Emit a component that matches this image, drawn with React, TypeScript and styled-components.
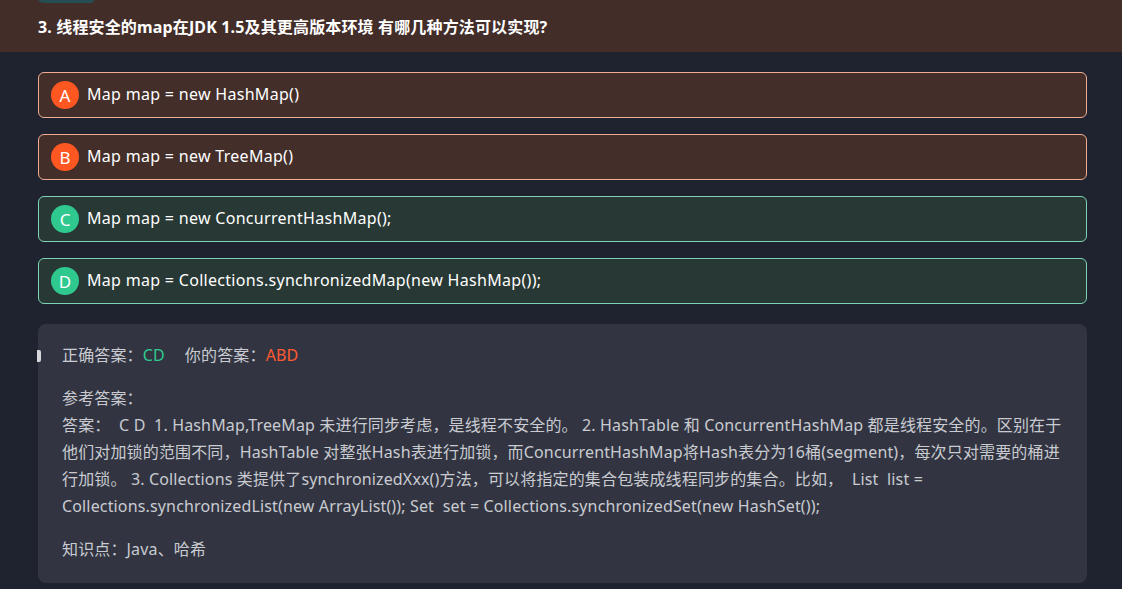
import React from "react";
import styled, { createGlobalStyle } from "styled-components";

const Global = createGlobalStyle`
  html, body { margin: 0; padding: 0; background: #1f2330; }
  body { font-family: "Noto Sans", "Noto Sans CJK SC", sans-serif; overflow: hidden; }
`;

const Page = styled.div`
  width: 1122px;
  height: 589px;
  overflow: hidden;
  background: #1f2330;
  display: flex;
  flex-direction: column;
`;

const Header = styled.header`
  position: relative;
  flex: none;
  height: 52px;
  background: #432d29;
  display: flex;
  align-items: center;
  padding: 0 38px;
  box-sizing: border-box;
`;

const Tag = styled.div`
  position: absolute;
  left: 38px;
  top: -20px;
  width: 57px;
  height: 23px;
  border-radius: 5px;
  background: #244e52;
`;

const Title = styled.h1`
  margin: 0;
  font-size: 16px;
  font-weight: 700;
  color: #ffffff;
  letter-spacing: 0.15px;
`;

const Body = styled.main`
  padding: 20px 35px 0 38px;
  display: flex;
  flex-direction: column;
  gap: 16px;
`;

const Option = styled.div<{ $ok: boolean }>`
  flex: none;
  height: 46px;
  box-sizing: border-box;
  border: 1px solid ${(p) => (p.$ok ? "#7ed3b4" : "#f0ad93")};
  background: ${(p) => (p.$ok ? "#283834" : "#432e29")};
  border-radius: 6px;
  display: flex;
  align-items: center;
  padding-left: 12px;
  gap: 8px;
`;

const Badge = styled.span<{ $ok: boolean }>`
  width: 28px;
  height: 28px;
  border-radius: 50%;
  background: ${(p) => (p.$ok ? "#2fc98f" : "#ff5722")};
  color: #fff;
  font-size: 17px;
  display: flex;
  align-items: center;
  justify-content: center;
`;

const OptionText = styled.span`
  color: #ffffff;
  font-size: 16px;
  line-height: 20px;
  padding-bottom: 2px;
  letter-spacing: 0.3px;
`;

const Panel = styled.section`
  position: relative;
  flex: none;
  margin-top: 4px;
  background: #323541;
  border-radius: 8px;
  padding: 18px 24px 20px 24px;
  color: #c9cbd1;
  font-size: 16px;
  line-height: 27px;
  letter-spacing: 0.15px;
`;

const Marker = styled.span`
  position: absolute;
  left: -1px;
  top: 26px;
  width: 4px;
  height: 12px;
  border-radius: 0 2px 2px 0;
  background: #d8d8dc;
`;

const Row = styled.p`
  margin: 0;
`;

const Line = styled.span`
  display: block;
  white-space: nowrap;
`;

const Block = styled.div`
  margin-top: 16px;
`;

const Good = styled.span`
  color: #2fc98f;
`;

const Bad = styled.span`
  color: #ff5a30;
`;

const Gap = styled.span`
  display: inline-block;
  width: 20px;
`;

const options = [
  { k: "A", t: "Map map = new HashMap()", ok: false },
  { k: "B", t: "Map map = new TreeMap()", ok: false },
  { k: "C", t: "Map map = new ConcurrentHashMap();", ok: true },
  { k: "D", t: "Map map = Collections.synchronizedMap(new HashMap());", ok: true },
];

const answerLines = [
  "答案：\u00a0 C D\u00a0 1. HashMap,TreeMap 未进行同步考虑，是线程不安全的。 2. HashTable 和 ConcurrentHashMap 都是线程安全的。区别在于",
  "他们对加锁的范围不同，HashTable 对整张Hash表进行加锁，而ConcurrentHashMap将Hash表分为16桶(segment)，每次只对需要的桶进",
  "行加锁。 3. Collections 类提供了synchronizedXxx()方法，可以将指定的集合包装成线程同步的集合。比如，\u00a0 List\u00a0 list =",
  "Collections.synchronizedList(new ArrayList()); Set\u00a0 set = Collections.synchronizedSet(new HashSet());",
];

export default function App() {
  return (
    <Page>
      <Global />
      <Header>
        <Tag />
        <Title>3. 线程安全的map在JDK 1.5及其更高版本环境 有哪几种方法可以实现?</Title>
      </Header>
      <Body>
        {options.map((o) => (
          <Option key={o.k} $ok={o.ok}>
            <Badge $ok={o.ok}>{o.k}</Badge>
            <OptionText>{o.t}</OptionText>
          </Option>
        ))}
        <Panel>
          <Marker />
          <Row>
            正确答案：<Good>CD</Good>
            <Gap />
            你的答案：<Bad>ABD</Bad>
          </Row>
          <Block>
            <Row>参考答案：</Row>
            <Row>
              {answerLines.map((l, i) => (
                <Line key={i}>{l}</Line>
              ))}
            </Row>
          </Block>
          <Block>
            <Row>知识点：Java、哈希</Row>
          </Block>
        </Panel>
      </Body>
    </Page>
  );
}
